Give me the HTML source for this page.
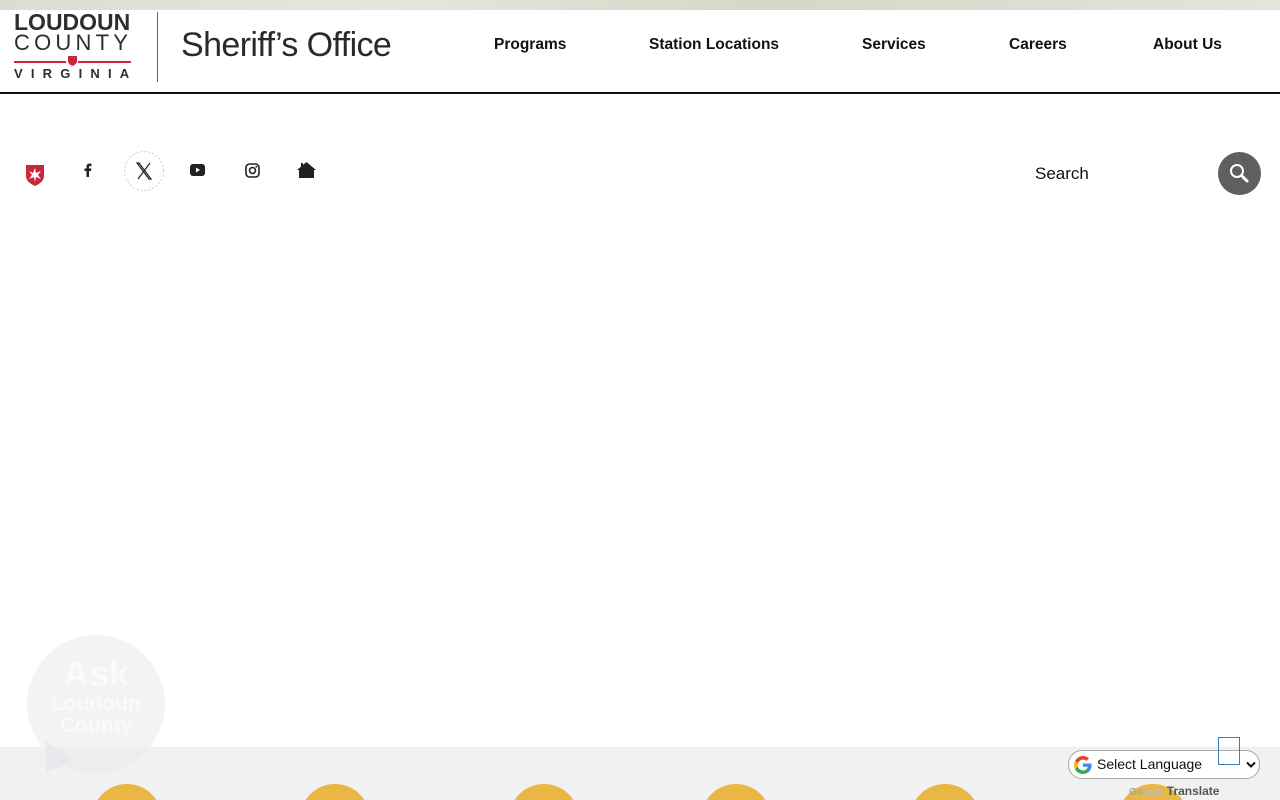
<!DOCTYPE html>
<html><head><meta charset="utf-8">
<style>
*{margin:0;padding:0;box-sizing:border-box}
html,body{width:1280px;height:800px;overflow:hidden}
body{background:#fff;font-family:"Liberation Sans",sans-serif;position:relative}
.topstrip{position:absolute;left:0;top:0;width:1280px;height:10px;background:linear-gradient(90deg,#dcdcd0,#e8e6dc 30%,#d8d6c8 60%,#e4e4da);}
.header{position:absolute;left:0;top:10px;width:1280px;height:84px;background:#fff;border-bottom:2px solid #111;}
.lc{position:absolute;left:14px;top:0;color:#333;}
.lc .a{position:absolute;left:0;top:-1px;font-size:23px;font-weight:bold;letter-spacing:0px;white-space:nowrap;color:#2e2e2e}
.lc .b{position:absolute;left:0;top:20px;font-size:22px;letter-spacing:4.2px;white-space:nowrap;color:#2e2e2e}
.lc .line{position:absolute;top:51px;height:2px;background:#c8283a}
.lc .c{position:absolute;left:0;top:56px;font-size:13px;font-weight:bold;letter-spacing:8.2px;white-space:nowrap;color:#2e2e2e}
.div{position:absolute;left:157px;top:2px;width:1px;height:70px;background:#666}
.so{position:absolute;left:181px;top:16px;font-size:34px;color:#2a2a2a;letter-spacing:-0.6px;white-space:nowrap}
.nav a{position:absolute;top:26px;font-size:15.5px;font-weight:bold;color:#111;text-decoration:none;white-space:nowrap}
.icons svg{position:absolute}
.search{position:absolute;left:1035px;top:164px;font-size:17px;color:#111}
.sbtn{position:absolute;left:1218px;top:152px;width:43px;height:43px;border-radius:50%;background:#5f5f5f}
.ask{position:absolute;left:27px;top:635px;width:138px;height:138px;border-radius:50%;background:rgba(232,233,236,0.55);text-align:center;color:rgba(255,255,255,0.6);font-weight:bold;z-index:2}
.foot{position:absolute;left:0;top:747px;width:1280px;height:53px;background:#f1f1f1;overflow:hidden}
.dot{position:absolute;top:37px;width:70px;height:70px;border-radius:50%;background:#e9b743}
.gt{position:absolute;left:1068px;top:750px;width:192px;height:29px;border:1px solid #aaa;border-radius:14px;background:#fff;font-size:14px;color:#111}
</style></head><body>
<div class="topstrip"></div>
<div class="header">
 <div class="lc">
  <div class="a">LOUDOUN</div>
  <div class="b">COUNTY</div>
  <div class="line" style="left:0;width:52px"></div>
  <div class="line" style="left:64px;width:53px"></div>
  <svg style="position:absolute;left:54px;top:46px" width="9" height="10" viewBox="0 0 9 10"><path d="M0 0H9V5Q9 8 4.5 10Q0 8 0 5Z" fill="#c8283a"/></svg>
  <div class="c">VIRGINIA</div>
 </div>
 <div class="div"></div>
 <div class="so">Sheriff’s Office</div>
 <div class="nav">
  <a style="left:494px">Programs</a>
  <a style="left:649px">Station Locations</a>
  <a style="left:862px">Services</a>
  <a style="left:1009px">Careers</a>
  <a style="left:1153px">About Us</a>
 </div>
</div>
<div class="icons">
 <svg style="left:26px;top:165px" width="18" height="21" viewBox="0 0 18 21"><path d="M0 0H18V11Q18 17 9 21Q0 17 0 11Z" fill="#c8283a"/><path d="M9 3L7 8L3 6L6 10L3 14L8 12L9 17L10 12L15 14L12 10L15 6L10 8Z" fill="#fff"/></svg>
 <svg style="left:84px;top:163px" width="8" height="14" viewBox="0 0 8 14"><path d="M5 14V8H7L7.4 5.5H5V4Q5 3 6 3H7.5V0.7Q6.5 0.5 5.5 0.5Q2.5 0.5 2.5 3.5V5.5H0.5V8H2.5V14Z" fill="#222"/></svg>
 <svg style="left:124px;top:151px" width="40" height="40" viewBox="0 0 40 40"><circle cx="20" cy="20" r="19.5" fill="none" stroke="#ccc" stroke-dasharray="2 2"/><path d="M13 12L25 28H27L15 12Z" fill="none" stroke="#222" stroke-width="1.2"/><path d="M26 12L14 28" stroke="#222" stroke-width="1.2"/></svg>
 <svg style="left:190px;top:164px" width="15" height="12" viewBox="0 0 15 12"><rect width="15" height="12" rx="3" fill="#222"/><path d="M6 3.5V8.5L10 6Z" fill="#fff"/></svg>
 <svg style="left:245px;top:163px" width="15" height="15" viewBox="0 0 15 15"><rect x="1" y="1" width="13" height="13" rx="3.5" fill="none" stroke="#222" stroke-width="1.6"/><circle cx="7.5" cy="7.5" r="3" fill="none" stroke="#222" stroke-width="1.6"/><circle cx="11.3" cy="3.7" r="0.9" fill="#222"/></svg>
 <svg style="left:297px;top:162px" width="19" height="16" viewBox="0 0 19 16"><path d="M9.5 0L19 8H17V16H2V8H0L4 4.6V1H6V2.9Z" fill="#222"/></svg>
</div>
<div class="search">Search</div>
<div class="sbtn"><svg width="43" height="43" viewBox="0 0 43 43"><circle cx="19" cy="19" r="6" fill="none" stroke="#fff" stroke-width="2"/><path d="M23.5 23.5L29 29" stroke="#fff" stroke-width="3" stroke-linecap="round"/></svg></div>
<div class="foot">
<div class="dot" style="left:92px"></div>
<div class="dot" style="left:300px"></div>
<div class="dot" style="left:509px"></div>
<div class="dot" style="left:701px"></div>
<div class="dot" style="left:910px"></div>
<div class="dot" style="left:1118px"></div>
</div>
<div class="ask"><div style="font-size:36px;margin-top:20px;line-height:38px">Ask</div><div style="font-size:21px;line-height:22px">Loudoun<br>County</div></div>
<svg style="position:absolute;left:44px;top:740px;z-index:2" width="30" height="33" viewBox="0 0 30 33"><path d="M2 0L2 32L28 22Z" fill="rgba(228,229,232,0.6)"/></svg>
<div style="position:absolute;left:1218px;top:737px;width:22px;height:28px;border:1px solid #3a7bbf;z-index:3"></div>
<div class="gt">
 <svg style="position:absolute;left:5px;top:5px" width="18" height="18" viewBox="0 0 18 18"><path d="M17.6 9.2c0-.6-.1-1.2-.2-1.7H9v3.3h4.8c-.2 1.1-.8 2-1.8 2.7v2.2h2.9c1.7-1.6 2.7-3.9 2.7-6.5z" fill="#4285F4"/><path d="M9 18c2.4 0 4.5-.8 5.9-2.2l-2.9-2.2c-.8.5-1.8.9-3 .9-2.3 0-4.3-1.6-5-3.7H1v2.3C2.5 16 5.5 18 9 18z" fill="#34A853"/><path d="M4 10.8c-.2-.5-.3-1.1-.3-1.8s.1-1.2.3-1.8V5H1C.4 6.2 0 7.6 0 9s.4 2.8 1 4z" fill="#FBBC05"/><path d="M9 3.6c1.3 0 2.5.5 3.4 1.3l2.6-2.6C13.5.9 11.4 0 9 0 5.5 0 2.5 2 1 5l3 2.3c.7-2.1 2.7-3.7 5-3.7z" fill="#EA4335"/></svg>
 <span style="position:absolute;left:28px;top:5px">Select Language</span>
 <svg style="position:absolute;left:177px;top:10px" width="10" height="8" viewBox="0 0 10 8"><path d="M1 1.5L5 5.5L9 1.5" fill="none" stroke="#111" stroke-width="2"/></svg>
</div>
<div style="position:absolute;left:1129px;top:784px;font-size:12px;font-weight:bold;color:#555;white-space:nowrap"><span style="color:#9aa;font-size:10px">Go</span><span style="color:#bbb;font-size:10px">ogle</span> Translate</div>
</body></html>
